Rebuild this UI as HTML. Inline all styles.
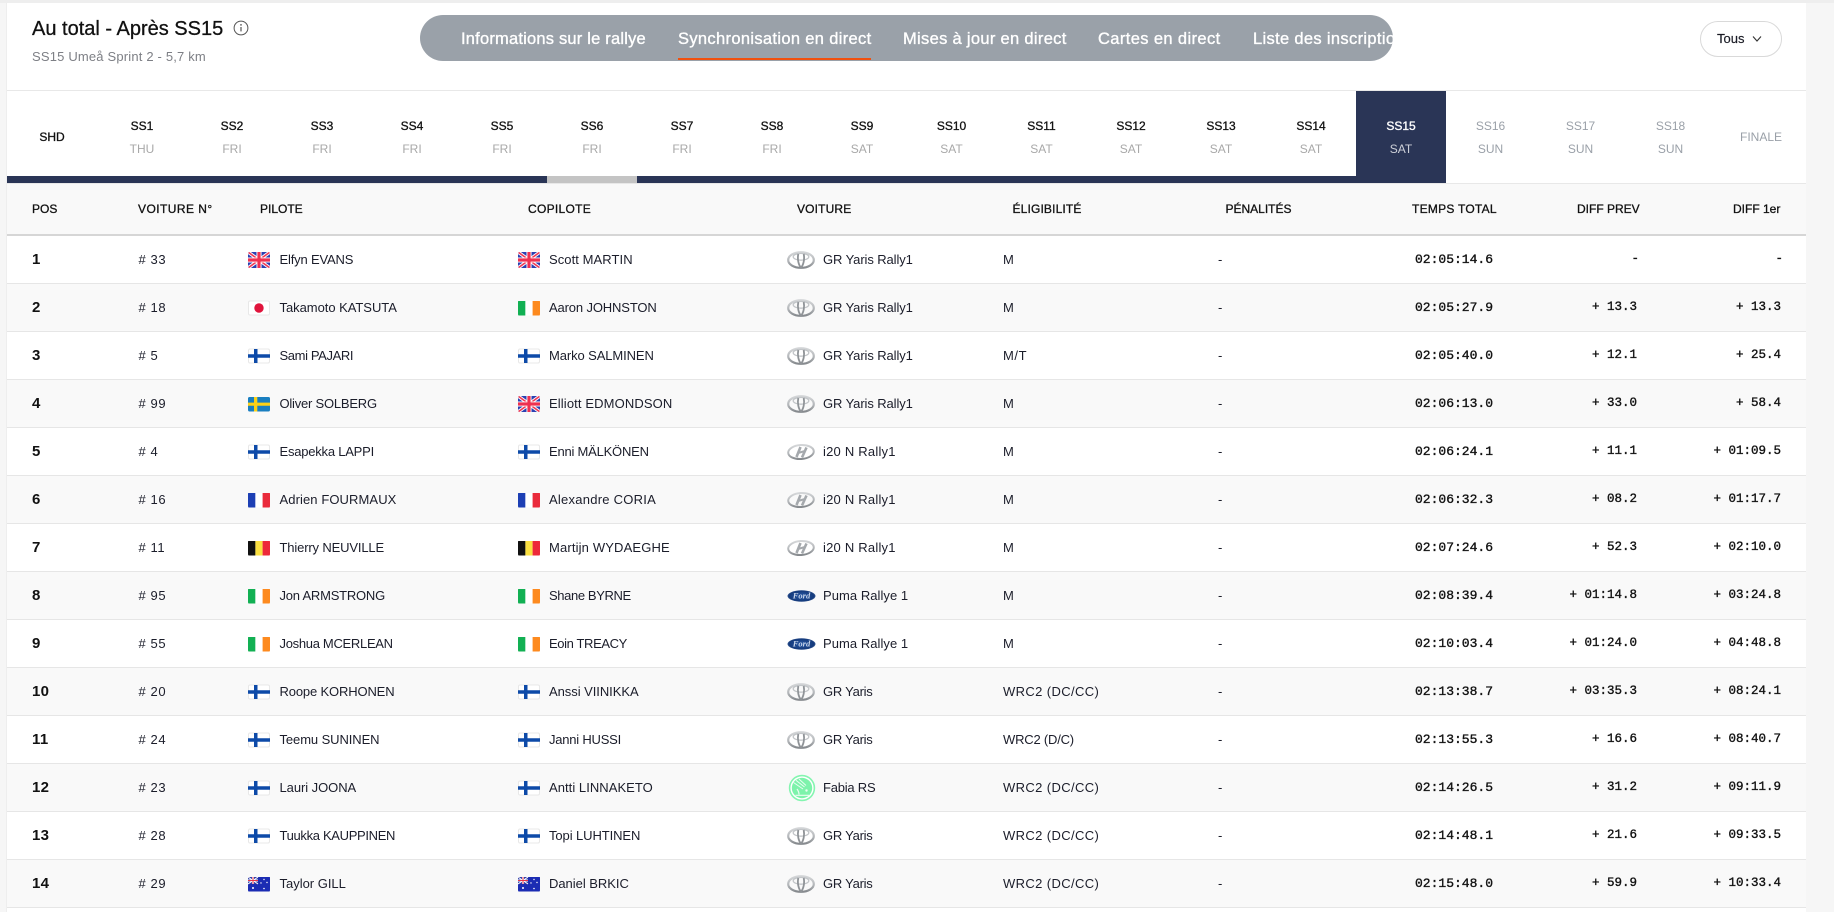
<!DOCTYPE html>
<html lang="fr">
<head>
<meta charset="utf-8">
<title>Au total - Après SS15</title>
<style>
*{box-sizing:border-box}
html,body{margin:0;padding:0;width:1834px;height:912px;overflow:hidden;background:#f6f6f6;font-family:"Liberation Sans",sans-serif;color:#1b1d2a}
.abs,.main div,.main span,.main svg{position:absolute}
.main{position:absolute;left:7px;top:3px;width:1800px;height:909px;background:#fff;border-left:1px solid #eee;margin-left:-1px}
.top{position:fixed;left:0;top:0;width:100%;height:3px;background:#eee}
.title{left:25px;top:14px;font-size:20px;line-height:24px;white-space:nowrap;-webkit-text-stroke:.3px #111;color:#111;letter-spacing:0}
.sub{left:25px;top:46px;font-size:13px;line-height:16px;color:#7d7f85;white-space:nowrap;letter-spacing:.18px}
.pill{left:413px;top:12px;width:973px;height:46px;background:#9aa1a9;border-radius:23px;overflow:hidden}
.pill span{top:0;line-height:48px;color:#fff;font-size:16.5px;white-space:nowrap;-webkit-text-stroke:.35px #fff;letter-spacing:.33px}
.pill i{position:absolute;left:258px;top:43px;width:193px;height:2px;background:#f1500e}
.tous{left:1693px;top:18px;width:82px;height:36px;border:1px solid #d9d9d9;border-radius:18px;background:#fff}
.tous span{left:16px;top:0;line-height:34px;font-size:13px;-webkit-text-stroke:.15px #111}
.hr{left:0;top:87px;width:1799px;height:1px;background:#e8e8e8}
.tab{top:88px;width:90px;height:85px;text-align:center;font-size:12px}
.tab b{position:absolute;left:0;width:100%;top:26.5px;line-height:16px;font-weight:normal;-webkit-text-stroke:.3px #111;color:#111}
.tab u{position:absolute;left:0;width:100%;top:50px;line-height:16px;text-decoration:none;color:#a8a8a8}
.tab.m b{top:37.5px}
.tab.f b{color:#9aa0a8;-webkit-text-stroke:0}
.tab.f u{color:#9aa0a8}
.tab.on{background:#2a3556;height:92px}
.tab.on b{color:#fff;-webkit-text-stroke:.35px #fff}
.tab.on u{color:#cdd0d8}
.bar{left:0;top:173px;height:7px;background:#2a3556}
.th{left:0;top:180px;width:1799px;height:53px;background:#f9f9f9;border-top:1px solid #e8e8e8;border-bottom:2px solid #d6d6d6}
.th span{top:0;line-height:51px;font-size:12px;white-space:nowrap;-webkit-text-stroke:.3px #111;color:#111}
.r{left:0;width:1799px;height:48px;border-bottom:1px solid #e6e6e6;background:#fff}
.r.g{background:#f9f9f9}
.r span{top:0;line-height:47px;font-size:13px;white-space:nowrap;letter-spacing:-.22px}
.r .p{left:25px;font-size:15px;font-weight:bold;letter-spacing:.3px;color:#111}
.r .n{left:132px;letter-spacing:.6px;margin-left:-.5px}
.r .a{left:272.5px}
.r .c{left:542px}
.r .v{left:816px}
.r .gr{letter-spacing:-.1px}
.r .hy{letter-spacing:.22px}
.r .pu{letter-spacing:.05px}
.r .sh{letter-spacing:-.25px}
.r .e{left:996px;letter-spacing:.38px}
.r .x{left:1211px}
.r .t,.r .d,.r .o{font-family:"Liberation Mono",monospace;font-size:12.5px;letter-spacing:0;-webkit-text-stroke:.35px #111;color:#111}
.r .t{right:313px;font-size:13px}
.r .d{right:169px}
.r .o{right:25px}
.fl1{left:241px;top:15.5px;border-radius:2px}
.fl2{left:511px;top:15.5px;border-radius:2px}
.lg{left:780px;top:14.5px}
</style>
</head>
<body>
<svg width="0" height="0" style="position:absolute">
<defs>
<linearGradient id="sv" x1="0" y1="0" x2="0" y2="1"><stop offset="0" stop-color="#d4d6d8"/><stop offset=".55" stop-color="#b4b7ba"/><stop offset="1" stop-color="#85898d"/></linearGradient>
<radialGradient id="fd" cx=".5" cy=".5" r=".55"><stop offset="0" stop-color="#2a5aa6"/><stop offset=".8" stop-color="#143a7c"/><stop offset="1" stop-color="#4b6a9e"/></radialGradient>
<symbol id="gb" viewBox="0 0 22 16"><rect width="22" height="16" fill="#2b3fb0"/><path d="M0 0L22 16M22 0L0 16" stroke="#fff" stroke-width="3.4"/><path d="M0 0L22 16M22 0L0 16" stroke="#f03a54" stroke-width="1.6"/><path d="M11 0V16M0 8H22" stroke="#fff" stroke-width="5"/><path d="M11 0V16M0 8H22" stroke="#ee3050" stroke-width="3.2"/></symbol>
<symbol id="jp" viewBox="0 0 22 16"><rect x=".5" y="1" width="21" height="14" rx="1.5" fill="#fff" stroke="#e8e8e8"/><circle cx="11" cy="8" r="4.7" fill="#e0143c"/></symbol>
<symbol id="fi" viewBox="0 0 22 16"><rect x=".5" y="1" width="21" height="14" rx="1.5" fill="#fff" stroke="#e8e8e8"/><path d="M6 1H9.5V15H6ZM0 6.2H22V9.8H0Z" fill="#0d4aa8"/></symbol>
<symbol id="se" viewBox="0 0 22 16"><rect y="1" width="22" height="14.5" rx="1.5" fill="#1a7fc0"/><path d="M6 1H9.3V15.5H6ZM0 6.6H22V9.8H0Z" fill="#fcd116"/></symbol>
<symbol id="ie" viewBox="0 0 22 16"><rect y="1" width="7.4" height="14.5" fill="#12b053"/><rect x="7.4" y="1" width="7.2" height="14.5" fill="#fff"/><rect x="14.6" y="1" width="7.4" height="14.5" fill="#fd8a1f"/></symbol>
<symbol id="fr" viewBox="0 0 22 16"><rect y="1" width="7.4" height="14.5" fill="#1d3fb4"/><rect x="7.4" y="1" width="7.2" height="14.5" fill="#fff"/><rect x="14.6" y="1" width="7.4" height="14.5" fill="#ea2b3c"/></symbol>
<symbol id="be" viewBox="0 0 22 16"><rect y="1" width="7.4" height="14.5" fill="#111"/><rect x="7.4" y="1" width="7.2" height="14.5" fill="#fae042"/><rect x="14.6" y="1" width="7.4" height="14.5" fill="#ed2939"/></symbol>
<symbol id="au" viewBox="0 0 22 16"><rect y="1" width="22" height="14.5" fill="#1b2cb3"/><rect y="1" width="10" height="7" fill="#3340a8"/><path d="M0 1L10 8M10 1L0 8" stroke="#fff" stroke-width="1"/><path d="M5 1V8M0 4.5H10" stroke="#fff" stroke-width="2"/><path d="M5 1V8M0 4.5H10" stroke="#e5344a" stroke-width="1"/><g fill="#fff"><circle cx="5" cy="12" r="1"/><circle cx="16" cy="3.5" r=".7"/><circle cx="16" cy="12.5" r=".8"/><circle cx="13" cy="7" r=".7"/><circle cx="19" cy="6.5" r=".7"/></g></symbol>
<symbol id="toy" viewBox="0 0 28 18"><ellipse cx="14" cy="9" rx="12.8" ry="7.8" fill="none" stroke="url(#sv)" stroke-width="2.2"/><ellipse cx="14" cy="5.8" rx="7.8" ry="3.4" fill="none" stroke="#c2c5c8" stroke-width="1.3"/><path d="M11.3 3C10.2 8 11.5 14 14 16.6C16.5 14 17.8 8 16.7 3" fill="none" stroke="#8f9397" stroke-width="1.8"/></symbol>
<symbol id="hy" viewBox="0 0 28 18"><ellipse cx="14" cy="9" rx="12.8" ry="7" fill="none" stroke="url(#sv)" stroke-width="2" transform="rotate(-4 14 9)"/><path d="M9.5 14L13.5 4M15 14.5L19.5 4.5" stroke="#a5a9ad" stroke-width="2.6" fill="none"/><path d="M11 10L18 8" stroke="#a5a9ad" stroke-width="2" fill="none"/></symbol>
<symbol id="sk" viewBox="0 0 28 28"><circle cx="14" cy="14" r="12.4" fill="#fff" stroke="#84f5b0" stroke-width="1.6"/><circle cx="14" cy="14" r="10.2" fill="#7df3ab"/><path d="M5.5 8.5L15 15M8 6.3L16.5 13M11 5L18 11.5" stroke="#e9fdf1" stroke-width="1" fill="none"/><path d="M9 15C10.5 17 11 19 11 20.5M7.5 21.3H21" stroke="#e9fdf1" stroke-width="1.2" fill="none"/><circle cx="18.5" cy="16.5" r="1.2" fill="#e9fdf1"/></symbol>
</defs>
</svg>
<div class="top"></div>
<div class="main">
  <div class="title">Au total - Après SS15</div>
  <svg style="left:225.5px;top:17px" width="16" height="16" viewBox="0 0 16 16"><circle cx="8" cy="8" r="6.9" fill="none" stroke="#555" stroke-width="1"/><path d="M8 7V11.4" stroke="#555" stroke-width="1.2"/><circle cx="8" cy="4.9" r=".85" fill="#555"/></svg>
  <div class="sub">SS15 Umeå Sprint 2 - 5,7 km</div>
  <div class="pill">
    <span style="left:41px;letter-spacing:.2px">Informations sur le rallye</span>
    <span style="left:258px">Synchronisation en direct</span>
    <span style="left:483px;letter-spacing:.31px">Mises à jour en direct</span>
    <span style="left:678px;letter-spacing:.38px">Cartes en direct</span>
    <span style="left:833px">Liste des inscriptions</span>
    <i></i>
  </div>
  <div class="tous"><span>Tous</span><svg style="left:50px;top:12px" width="12" height="10" viewBox="0 0 12 10"><path d="M2 2.5L6 7L10 2.5" fill="none" stroke="#333" stroke-width="1.1"/></svg></div>
  <div class="hr"></div>

  <div class="tab m" style="left:0"><b>SHD</b></div>
  <div class="tab" style="left:90px"><b>SS1</b><u>THU</u></div>
  <div class="tab" style="left:180px"><b>SS2</b><u>FRI</u></div>
  <div class="tab" style="left:270px"><b>SS3</b><u>FRI</u></div>
  <div class="tab" style="left:360px"><b>SS4</b><u>FRI</u></div>
  <div class="tab" style="left:450px"><b>SS5</b><u>FRI</u></div>
  <div class="tab" style="left:540px"><b>SS6</b><u>FRI</u></div>
  <div class="tab" style="left:630px"><b>SS7</b><u>FRI</u></div>
  <div class="tab" style="left:720px"><b>SS8</b><u>FRI</u></div>
  <div class="tab" style="left:810px"><b>SS9</b><u>SAT</u></div>
  <div class="tab" style="left:899.5px"><b>SS10</b><u>SAT</u></div>
  <div class="tab" style="left:989.5px"><b>SS11</b><u>SAT</u></div>
  <div class="tab" style="left:1079px"><b>SS12</b><u>SAT</u></div>
  <div class="tab" style="left:1169px"><b>SS13</b><u>SAT</u></div>
  <div class="tab" style="left:1259px"><b>SS14</b><u>SAT</u></div>
  <div class="bar" style="width:540px"></div>
  <div class="bar" style="left:540px;width:90px;background:#c4c4c4"></div>
  <div class="bar" style="left:630px;width:720px"></div>
  <div class="tab on" style="left:1349px"><b>SS15</b><u>SAT</u></div>
  <div class="tab f" style="left:1438.5px"><b>SS16</b><u>SUN</u></div>
  <div class="tab f" style="left:1528.5px"><b>SS17</b><u>SUN</u></div>
  <div class="tab f" style="left:1618.5px"><b>SS18</b><u>SUN</u></div>
  <div class="tab f m" style="left:1709px"><b>FINALE</b></div>

  <div class="th">
    <span style="left:25px">POS</span>
    <span style="left:131px;letter-spacing:.45px">VOITURE N°</span>
    <span style="left:253px">PILOTE</span>
    <span style="left:521px;letter-spacing:.3px">COPILOTE</span>
    <span style="left:790px;letter-spacing:.15px">VOITURE</span>
    <span style="left:1005.5px;letter-spacing:.15px">ÉLIGIBILITÉ</span>
    <span style="left:1218.5px">PÉNALITÉS</span>
    <span style="left:1405px;letter-spacing:.25px">TEMPS TOTAL</span>
    <span style="left:1570px">DIFF PREV</span>
    <span style="left:1726px">DIFF 1er</span>
  </div>

  <div class="r" style="top:233px"><span class="p">1</span><span class="n"># 33</span><svg class="fl1" width="22" height="16"><use href="#gb"/></svg><span class="a" style="letter-spacing:-.17px">Elfyn EVANS</span><svg class="fl2" width="22" height="16"><use href="#gb"/></svg><span class="c" style="letter-spacing:.07px">Scott MARTIN</span><svg class="lg" width="28" height="18"><use href="#toy"/></svg><span class="v gr">GR Yaris Rally1</span><span class="e">M</span><span class="x">-</span><span class="t">02:05:14.6</span><span class="d" style="margin-right:-2px">-</span><span class="o" style="margin-right:-2px">-</span></div>
  <div class="r g" style="top:281px"><span class="p">2</span><span class="n"># 18</span><svg class="fl1" width="22" height="16"><use href="#jp"/></svg><span class="a" style="letter-spacing:-.04px">Takamoto KATSUTA</span><svg class="fl2" width="22" height="16"><use href="#ie"/></svg><span class="c" style="letter-spacing:-.14px">Aaron JOHNSTON</span><svg class="lg" width="28" height="18"><use href="#toy"/></svg><span class="v gr">GR Yaris Rally1</span><span class="e">M</span><span class="x">-</span><span class="t">02:05:27.9</span><span class="d">+ 13.3</span><span class="o">+ 13.3</span></div>
  <div class="r" style="top:329px"><span class="p">3</span><span class="n"># 5</span><svg class="fl1" width="22" height="16"><use href="#fi"/></svg><span class="a" style="letter-spacing:-.38px">Sami PAJARI</span><svg class="fl2" width="22" height="16"><use href="#fi"/></svg><span class="c" style="letter-spacing:-.1px">Marko SALMINEN</span><svg class="lg" width="28" height="18"><use href="#toy"/></svg><span class="v gr">GR Yaris Rally1</span><span class="e" style="letter-spacing:.6px">M/T</span><span class="x">-</span><span class="t">02:05:40.0</span><span class="d">+ 12.1</span><span class="o">+ 25.4</span></div>
  <div class="r g" style="top:377px"><span class="p">4</span><span class="n"># 99</span><svg class="fl1" width="22" height="16"><use href="#se"/></svg><span class="a">Oliver SOLBERG</span><svg class="fl2" width="22" height="16"><use href="#gb"/></svg><span class="c" style="letter-spacing:.12px">Elliott EDMONDSON</span><svg class="lg" width="28" height="18"><use href="#toy"/></svg><span class="v gr">GR Yaris Rally1</span><span class="e">M</span><span class="x">-</span><span class="t">02:06:13.0</span><span class="d">+ 33.0</span><span class="o">+ 58.4</span></div>
  <div class="r" style="top:425px"><span class="p">5</span><span class="n"># 4</span><svg class="fl1" width="22" height="16"><use href="#fi"/></svg><span class="a">Esapekka LAPPI</span><svg class="fl2" width="22" height="16"><use href="#fi"/></svg><span class="c">Enni MÄLKÖNEN</span><svg class="lg" width="28" height="18"><use href="#hy"/></svg><span class="v hy">i20 N Rally1</span><span class="e">M</span><span class="x">-</span><span class="t">02:06:24.1</span><span class="d">+ 11.1</span><span class="o">+ 01:09.5</span></div>
  <div class="r g" style="top:473px"><span class="p">6</span><span class="n"># 16</span><svg class="fl1" width="22" height="16"><use href="#fr"/></svg><span class="a" style="letter-spacing:.09px">Adrien FOURMAUX</span><svg class="fl2" width="22" height="16"><use href="#fr"/></svg><span class="c" style="letter-spacing:.25px">Alexandre CORIA</span><svg class="lg" width="28" height="18"><use href="#hy"/></svg><span class="v hy">i20 N Rally1</span><span class="e">M</span><span class="x">-</span><span class="t">02:06:32.3</span><span class="d">+ 08.2</span><span class="o">+ 01:17.7</span></div>
  <div class="r" style="top:521px"><span class="p">7</span><span class="n"># 11</span><svg class="fl1" width="22" height="16"><use href="#be"/></svg><span class="a" style="letter-spacing:-.15px">Thierry NEUVILLE</span><svg class="fl2" width="22" height="16"><use href="#be"/></svg><span class="c" style="letter-spacing:.15px">Martijn WYDAEGHE</span><svg class="lg" width="28" height="18"><use href="#hy"/></svg><span class="v hy">i20 N Rally1</span><span class="e">M</span><span class="x">-</span><span class="t">02:07:24.6</span><span class="d">+ 52.3</span><span class="o">+ 02:10.0</span></div>
  <div class="r g" style="top:569px"><span class="p">8</span><span class="n"># 95</span><svg class="fl1" width="22" height="16"><use href="#ie"/></svg><span class="a">Jon ARMSTRONG</span><svg class="fl2" width="22" height="16"><use href="#ie"/></svg><span class="c" style="letter-spacing:-.38px">Shane BYRNE</span><svg class="lg" width="29" height="18" viewBox="0 0 29 18"><ellipse cx="14.5" cy="9" rx="14" ry="5.7" fill="url(#fd)"/><text x="14.5" y="11.6" font-size="8.5" font-family="Liberation Serif,serif" font-style="italic" font-weight="bold" text-anchor="middle" fill="#c9d6ea">Ford</text></svg><span class="v pu">Puma Rallye 1</span><span class="e">M</span><span class="x">-</span><span class="t">02:08:39.4</span><span class="d">+ 01:14.8</span><span class="o">+ 03:24.8</span></div>
  <div class="r" style="top:617px"><span class="p">9</span><span class="n"># 55</span><svg class="fl1" width="22" height="16"><use href="#ie"/></svg><span class="a" style="letter-spacing:-.3px">Joshua MCERLEAN</span><svg class="fl2" width="22" height="16"><use href="#ie"/></svg><span class="c" style="letter-spacing:-.38px">Eoin TREACY</span><svg class="lg" width="29" height="18" viewBox="0 0 29 18"><ellipse cx="14.5" cy="9" rx="14" ry="5.7" fill="url(#fd)"/><text x="14.5" y="11.6" font-size="8.5" font-family="Liberation Serif,serif" font-style="italic" font-weight="bold" text-anchor="middle" fill="#c9d6ea">Ford</text></svg><span class="v pu">Puma Rallye 1</span><span class="e">M</span><span class="x">-</span><span class="t">02:10:03.4</span><span class="d">+ 01:24.0</span><span class="o">+ 04:48.8</span></div>
  <div class="r g" style="top:665px"><span class="p">10</span><span class="n"># 20</span><svg class="fl1" width="22" height="16"><use href="#fi"/></svg><span class="a" style="letter-spacing:-.15px">Roope KORHONEN</span><svg class="fl2" width="22" height="16"><use href="#fi"/></svg><span class="c" style="letter-spacing:-.05px">Anssi VIINIKKA</span><svg class="lg" width="28" height="18"><use href="#toy"/></svg><span class="v sh">GR Yaris</span><span class="e">WRC2 (DC/CC)</span><span class="x">-</span><span class="t">02:13:38.7</span><span class="d">+ 03:35.3</span><span class="o">+ 08:24.1</span></div>
  <div class="r" style="top:713px"><span class="p">11</span><span class="n"># 24</span><svg class="fl1" width="22" height="16"><use href="#fi"/></svg><span class="a" style="letter-spacing:-.09px">Teemu SUNINEN</span><svg class="fl2" width="22" height="16"><use href="#fi"/></svg><span class="c">Janni HUSSI</span><svg class="lg" width="28" height="18"><use href="#toy"/></svg><span class="v sh">GR Yaris</span><span class="e" style="letter-spacing:-.2px">WRC2 (D/C)</span><span class="x">-</span><span class="t">02:13:55.3</span><span class="d">+ 16.6</span><span class="o">+ 08:40.7</span></div>
  <div class="r g" style="top:761px"><span class="p">12</span><span class="n"># 23</span><svg class="fl1" width="22" height="16"><use href="#fi"/></svg><span class="a" style="letter-spacing:-.06px">Lauri JOONA</span><svg class="fl2" width="22" height="16"><use href="#fi"/></svg><span class="c" style="letter-spacing:.05px">Antti LINNAKETO</span><svg class="lg" width="28" height="28" style="left:781px;top:9.5px"><use href="#sk"/></svg><span class="v">Fabia RS</span><span class="e">WRC2 (DC/CC)</span><span class="x">-</span><span class="t">02:14:26.5</span><span class="d">+ 31.2</span><span class="o">+ 09:11.9</span></div>
  <div class="r" style="top:809px"><span class="p">13</span><span class="n"># 28</span><svg class="fl1" width="22" height="16"><use href="#fi"/></svg><span class="a" style="letter-spacing:-.33px">Tuukka KAUPPINEN</span><svg class="fl2" width="22" height="16"><use href="#fi"/></svg><span class="c" style="letter-spacing:-.09px">Topi LUHTINEN</span><svg class="lg" width="28" height="18"><use href="#toy"/></svg><span class="v sh">GR Yaris</span><span class="e">WRC2 (DC/CC)</span><span class="x">-</span><span class="t">02:14:48.1</span><span class="d">+ 21.6</span><span class="o">+ 09:33.5</span></div>
  <div class="r g" style="top:857px"><span class="p">14</span><span class="n"># 29</span><svg class="fl1" width="22" height="16"><use href="#au"/></svg><span class="a" style="letter-spacing:-.01px">Taylor GILL</span><svg class="fl2" width="22" height="16"><use href="#au"/></svg><span class="c" style="letter-spacing:-.03px">Daniel BRKIC</span><svg class="lg" width="28" height="18"><use href="#toy"/></svg><span class="v sh">GR Yaris</span><span class="e">WRC2 (DC/CC)</span><span class="x">-</span><span class="t">02:15:48.0</span><span class="d">+ 59.9</span><span class="o">+ 10:33.4</span></div>
</div>
</body>
</html>
